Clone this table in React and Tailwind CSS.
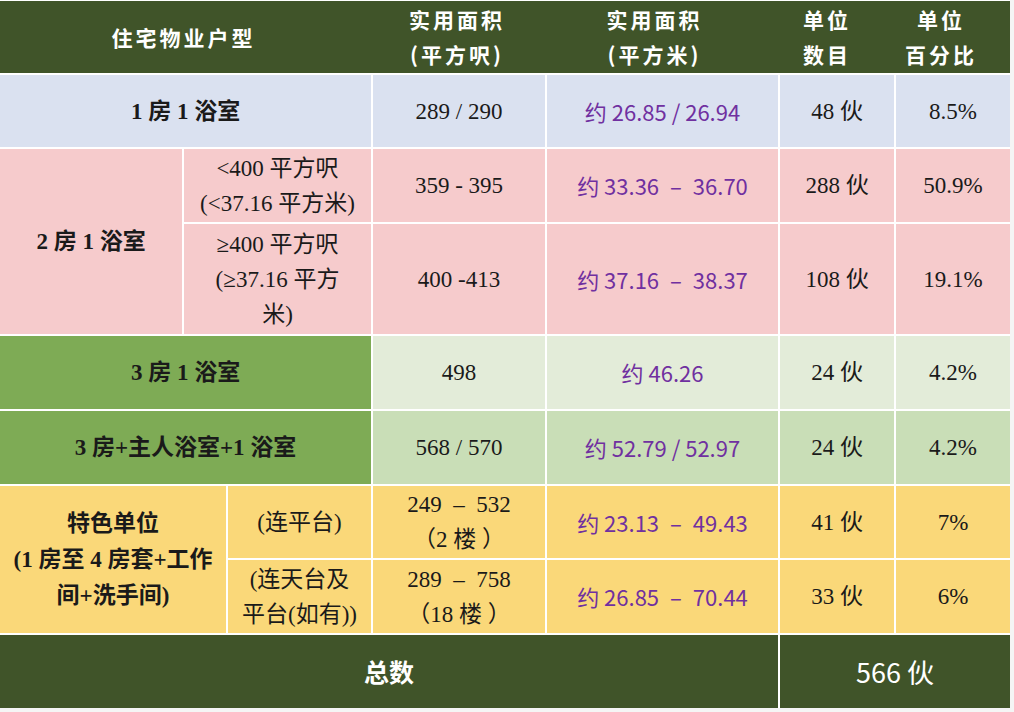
import React from "react";

const serif = "font-['Liberation_Serif','Noto_Sans_CJK_SC',serif]";
const sans = "font-['Noto_Sans_CJK_SC','Noto_Sans',sans-serif]";

function Cell({ className = "", children }) {
  return (
    <div className={`flex items-center justify-center text-center whitespace-nowrap ${className}`}>
      {children}
    </div>
  );
}

function Area({ children }) {
  return <span className={`${sans} text-[#7030a0] text-[22px]`}>{children}</span>;
}

function Row({ bg, sqft, sqm, units, pct }) {
  return (
    <>
      <Cell className={bg}>{sqft}</Cell>
      <Cell className={bg}>
        <Area>{sqm}</Area>
      </Cell>
      <Cell className={bg}>{units}</Cell>
      <Cell className={bg}>{pct}</Cell>
    </>
  );
}

export default function App() {
  const cols = "grid grid-cols-[182px_42px_143px_172px_231px_114px_114px]";

  return (
    <div className="w-full h-[712px] bg-[#f5f5f5]">
      <div className={`w-[1010px] flex flex-col gap-[2px] pt-px bg-white ${serif} text-[23px] leading-[35px] text-[#1a1a1a]`}>
        {/* 表头 */}
        <div className={`${cols} h-[72px] bg-[#405429] text-white font-bold ${sans} text-[21px] leading-[35px] tracking-[3px]`}>
          <Cell className="col-span-3">住宅物业户型</Cell>
          <Cell className="flex-col pl-2">
            <span>实用面积</span>
            <span>(平方呎)</span>
          </Cell>
          <Cell className="flex-col">
            <span>实用面积</span>
            <span>(平方米)</span>
          </Cell>
          <Cell className="flex-col">
            <span>单位</span>
            <span>数目</span>
          </Cell>
          <Cell className="flex-col">
            <span>单位</span>
            <span>百分比</span>
          </Cell>
        </div>

        {/* 内容 */}
        <div className={`${cols} grid-rows-[72px_73px_110px_73px_73px_72px_73px] gap-[2px]`}>
          <Cell className="col-span-3 bg-[#dae1f0] font-bold">1 房 1 浴室</Cell>
          <Row bg="bg-[#dae1f0]" sqft="289 / 290" sqm="约 26.85 / 26.94" units="48 伙" pct="8.5%" />

          <Cell className="row-span-2 bg-[#f6cbcc] font-bold">2 房 1 浴室</Cell>
          <Cell className="col-span-2 bg-[#f6cbcc] flex-col">
            <span>&lt;400 平方呎</span>
            <span>(&lt;37.16 平方米)</span>
          </Cell>
          <Row bg="bg-[#f6cbcc]" sqft="359 - 395" sqm={"约 33.36\u2002–\u200236.70"} units="288 伙" pct="50.9%" />
          <Cell className="col-span-2 bg-[#f6cbcc] flex-col">
            <span>≥400 平方呎</span>
            <span>(≥37.16 平方</span>
            <span>米)</span>
          </Cell>
          <Row bg="bg-[#f6cbcc]" sqft="400 -413" sqm={"约 37.16\u2002–\u200238.37"} units="108 伙" pct="19.1%" />

          <Cell className="col-span-3 bg-[#7eab55] font-bold">3 房 1 浴室</Cell>
          <Row bg="bg-[#e3ecd9]" sqft="498" sqm="约 46.26" units="24 伙" pct="4.2%" />

          <Cell className="col-span-3 bg-[#7eab55] font-bold">3 房+主人浴室+1 浴室</Cell>
          <Row bg="bg-[#c9deb7]" sqft="568 / 570" sqm="约 52.79 / 52.97" units="24 伙" pct="4.2%" />

          <Cell className="col-span-2 row-span-2 bg-[#fad879] flex-col font-bold leading-[36px]">
            <span>特色单位</span>
            <span>(1 房至 4 房套+工作</span>
            <span>间+洗手间)</span>
          </Cell>
          <Cell className="bg-[#fad879]">(连平台)</Cell>
          <Row
            bg="bg-[#fad879] flex-col"
            sqft={
              <>
                <span>{"249\u2002–\u2002532"}</span>
                <span>（2 楼 ）</span>
              </>
            }
            sqm={"约 23.13\u2002–\u200249.43"}
            units="41 伙"
            pct="7%"
          />
          <Cell className="bg-[#fad879] flex-col">
            <span>(连天台及</span>
            <span>平台(如有))</span>
          </Cell>
          <Row
            bg="bg-[#fad879] flex-col"
            sqft={
              <>
                <span>{"289\u2002–\u2002758"}</span>
                <span>（18 楼 ）</span>
              </>
            }
            sqm={"约 26.85\u2002–\u200270.44"}
            units="33 伙"
            pct="6%"
          />
        </div>

        {/* 总数 */}
        <div className={`flex gap-[2px] h-[73px] ${sans} text-white`}>
          <Cell className="w-[778px] bg-[#405429] font-bold text-[25px]">总数</Cell>
          <Cell className="flex-1 bg-[#405429] text-[27px]">566 伙</Cell>
        </div>
      </div>
    </div>
  );
}
